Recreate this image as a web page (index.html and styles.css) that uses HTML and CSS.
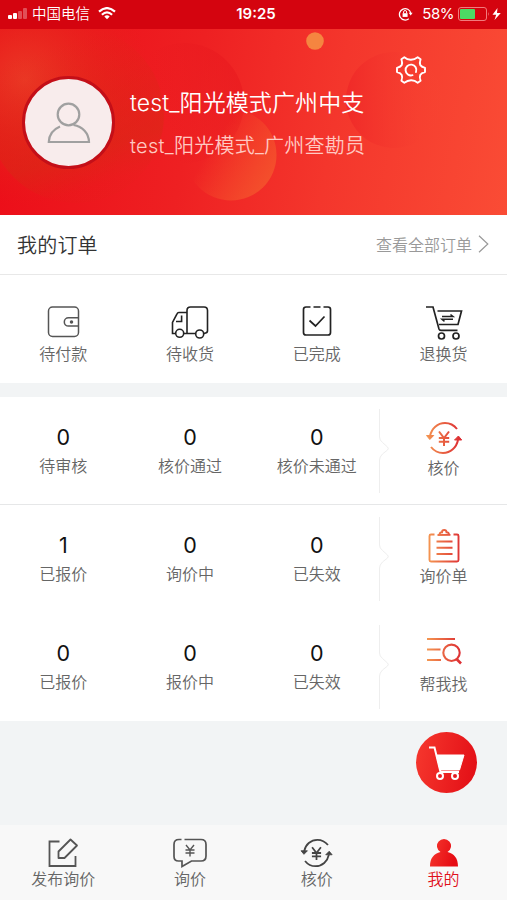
FILE: index.html
```
<!DOCTYPE html>
<html lang="zh-CN">
<head>
  <meta charset="UTF-8">
  <title>我的</title>
  <link rel="stylesheet" href="styles.css">
</head>
<body>
  <!-- shared gradients and symbols -->
  <svg class="defs" width="0" height="0">
    <defs>
      <linearGradient id="warm" gradientUnits="userSpaceOnUse" x1="0" y1="0" x2="36" y2="0">
        <stop offset="0" stop-color="#f59a52"/>
        <stop offset="1" stop-color="#dc2a32"/>
      </linearGradient>
      <linearGradient id="red" x1="0" y1="0" x2="1" y2="0.3">
        <stop offset="0" stop-color="#f6392f"/>
        <stop offset="1" stop-color="#e60c14"/>
      </linearGradient>
      <symbol id="price" viewBox="0 0 38 34">
        <path d="M5 15C6.500 7.500 12.500 2 20 2c5 0 9 2.200 12 6M33 19C31.500 26.500 25.500 32 18 32c-5 0-9-2.200-12-6" fill="none" stroke-width="2"/>
        <path d="M1.500 14.500h7.200L4.800 18.500zM29.500 19h7.200L33.400 15z" stroke-width="1"/>
        <path d="M14 10.500l5 6.500 5-6.500M19 17v8M13.800 17h10.400M13.800 20.800h10.400" fill="none" stroke-width="2"/>
      </symbol>
    </defs>
  </svg>

  <div class="status">
    <div class="carrier">
      <svg width="20" height="12" viewBox="0 0 20 12" fill="#fff">
        <rect x="0" y="7" width="4" height="4" rx="1"/>
        <rect x="5" y="5" width="4" height="6" rx="1"/>
        <rect x="10" y="3" width="4" height="8" rx="1" opacity="0.3"/>
        <rect x="15" y="0" width="4" height="11" rx="1" opacity="0.3"/>
      </svg>
      <span>中国电信</span>
      <svg class="wifi" width="18" height="13" viewBox="0 0 18 13" fill="none" stroke="#fff" stroke-width="2.200">
        <path d="M1 4.600Q9-2.400 17 4.600M3.900 7.700Q9 3 14.100 7.700"/>
        <path d="M6.300 9.400Q9 7 11.700 9.400L9 12.300z" fill="#fff" stroke="none"/>
      </svg>
    </div>
    <div class="time">19:25</div>
    <div class="power">
      <svg width="15" height="14" viewBox="0 0 15 14" fill="none" stroke="#fff" stroke-width="1.300">
        <path d="M10.800 11.700A5.700 5.700 0 1 1 12.700 6"/>
        <path d="M10.800 5.800h3.800l-1.900 2.800z" fill="#fff" stroke="none"/>
        <rect x="4.600" y="6.200" width="5" height="3.700" fill="#fff" stroke="none"/>
        <path d="M5.600 6.300V5a1.500 1.500 0 0 1 3 0v1.300" stroke-width="1"/>
      </svg>
      <span>58%</span>
      <svg width="44" height="14" viewBox="0 0 44 14">
        <rect x="0.500" y="0.500" width="28" height="13" rx="2.500" fill="none" stroke="#f27b7d"/>
        <rect x="2" y="2" width="15" height="10" rx="1" fill="#4cd964"/>
        <path d="M30 5q1.500 2 0 4z" fill="#f27b7d"/>
        <path d="M39.500 1L34.500 7.700h3.700L36.500 13 42.800 6H39z" fill="#fff"/>
      </svg>
    </div>
  </div>

  <div class="profile">
    <svg class="bubbles" width="507" height="186" viewBox="0 29 507 186">
      <defs>
        <radialGradient id="glow" gradientUnits="userSpaceOnUse" cx="25" cy="80" r="125">
          <stop offset="0" stop-color="#ec4028" stop-opacity="0.850"/>
          <stop offset="1" stop-color="#e02818" stop-opacity="0"/>
        </radialGradient>
        <linearGradient id="shade" x1="0" y1="0" x2="0.300" y2="1">
          <stop offset="0.200" stop-color="#d62a14" stop-opacity="0"/>
          <stop offset="0.800" stop-color="#d62a14" stop-opacity="0.700"/>
          <stop offset="1" stop-color="#d62a14" stop-opacity="0.100"/>
        </linearGradient>
        <linearGradient id="disc" x1="0" y1="0.600" x2="1" y2="0.300">
          <stop offset="0.300" stop-color="#e8181e" stop-opacity="0"/>
          <stop offset="1" stop-color="#e8181e" stop-opacity="0.600"/>
        </linearGradient>
        <linearGradient id="orange" x1="0.200" y1="0.200" x2="1" y2="0.700">
          <stop offset="0.200" stop-color="#f4502a" stop-opacity="0"/>
          <stop offset="1" stop-color="#f4502c"/>
        </linearGradient>
        <linearGradient id="fade" x1="0" y1="0" x2="1" y2="0">
          <stop offset="0" stop-color="#f02a28"/>
          <stop offset="1" stop-color="#f84633" stop-opacity="0.100"/>
        </linearGradient>
      </defs>
      <rect x="0" y="29" width="160" height="186" fill="url(#glow)"/>
      <circle cx="76" cy="115" r="88" fill="url(#shade)" opacity="0.700"/>
      <circle cx="184" cy="103" r="60" fill="url(#disc)"/>
      <circle cx="231" cy="155" r="45.500" fill="url(#orange)"/>
      <circle cx="394" cy="100" r="48" fill="url(#fade)"/>
      <circle cx="315" cy="41" r="8.800" fill="#f58540"/>
    </svg>
    <div class="avatar">
      <svg width="44" height="42" viewBox="0 0 44 42" fill="none" stroke="#a0a0a0" stroke-width="2.200">
        <circle cx="21.500" cy="12.500" r="10.800"/>
        <path d="M13 24.500C6 27.500 2 33 1.800 40H42c-.2-9-6.500-15.500-15.500-17"/>
      </svg>
    </div>
    <div class="who">
      <div class="name">test_阳光模式广州中支</div>
      <div class="role">test_阳光模式_广州查勘员</div>
    </div>
    <svg class="gear" width="30" height="28" viewBox="0 0 30 28" fill="none" stroke="#fff" stroke-width="1.900" stroke-linejoin="round" stroke-linecap="round">
      <path d="M8.300 1.300Q11.500 4 15 3.800T21.700 1.300L24.600 3.300C22.800 8.500 24 10.600 29 11.900V16.100C24 17.400 22.800 19.500 24.600 24.700L21.700 26.700Q18.500 24 15 24.200T8.300 26.700L5.400 24.700C7.200 19.500 6 17.400 1 16.100V11.900C6 10.600 7.200 8.500 5.400 3.300z"/>
      <path d="M16.500 19.200A5.400 5.400 0 1 1 20 16"/>
    </svg>
  </div>

  <div class="orders-head">
    <h2>我的订单</h2>
    <a class="more">查看全部订单
      <svg width="11" height="18" viewBox="0 0 11 18" fill="none" stroke="#999" stroke-width="1.200"><path d="M1 .8L9.800 9 1 17.200"/></svg>
    </a>
  </div>

  <div class="orders">
    <div class="item">
      <svg width="34" height="34" viewBox="0 0 34 34" fill="none" stroke="#555" stroke-width="1.500">
        <rect x="2.500" y="2" width="30" height="29.500" rx="4"/>
        <path d="M32.500 12.700H22.500a4.200 4.200 0 0 0 0 8.400h10"/>
        <circle cx="25.500" cy="17" r="1" fill="#333"/>
      </svg>
      <span>待付款</span>
    </div>
    <div class="item">
      <svg width="38" height="34" viewBox="0 0 38 34" fill="none" stroke="#222" stroke-width="1.600">
        <path d="M5 28.500H1.500V17.500L6 8.800q.6-1.300 1.800-1.300H16M16 28.500V5.500Q16 2 19.500 2H33q3.500 0 3.500 3.500V26q0 2-3.500 2.500M12.500 28.500h12"/>
        <path d="M10.600 10.500V16.500H5"/>
        <circle cx="8.700" cy="28.300" r="4"/>
        <circle cx="28.700" cy="29" r="4"/>
      </svg>
      <span>待收货</span>
    </div>
    <div class="item">
      <svg width="30" height="34" viewBox="0 0 30 34" fill="none" stroke="#222" stroke-width="1.700">
        <path d="M8.500 2H4Q1.500 2 1.500 4.500v23Q1.500 30 4 30h22q2.500 0 2.500-2.500v-23Q28.500 2 26 2h-4.500M11.500 2h7"/>
        <path d="M7.500 15.500l6 5.500 9-9.500"/>
      </svg>
      <span>已完成</span>
    </div>
    <div class="item">
      <svg width="38" height="35" viewBox="0 0 38 35" fill="none" stroke="#222" stroke-width="1.700">
        <path d="M1 2h7L14 24q.4 1.300 2 1.300h16.500M12.500 6H36.500L33 19.500H14"/>
        <path d="M17 11.500h11l-2.500-2M28 14.300H17l2.500 2" stroke-width="1.500"/>
        <circle cx="16.500" cy="31" r="3"/>
        <circle cx="31" cy="31" r="3"/>
      </svg>
      <span class="tight">退换货</span>
    </div>
  </div>

  <div class="stats">
    <div class="row line">
      <div class="stat"><b>0</b><span>待审核</span></div>
      <div class="stat"><b>0</b><span>核价通过</span></div>
      <div class="stat"><b>0</b><span>核价未通过</span></div>
      <div class="entry">
        <svg class="notch" width="12" height="84" viewBox="0 0 12 84"><path d="M1.500 0V28q0 3 3 5.500L9.500 38q1.500 1.500 0 3L4.500 45q-3 3-3 6V84"/></svg>
        <svg width="38" height="34" fill="url(#warm)" stroke="url(#warm)"><use href="#price"/></svg>
        <span>核价</span>
      </div>
    </div>
    <div class="row">
      <div class="stat"><b>1</b><span>已报价</span></div>
      <div class="stat"><b>0</b><span>询价中</span></div>
      <div class="stat"><b>0</b><span>已失效</span></div>
      <div class="entry">
        <svg class="notch" width="12" height="84" viewBox="0 0 12 84"><path d="M1.500 0V28q0 3 3 5.500L9.500 38q1.500 1.500 0 3L4.500 45q-3 3-3 6V84"/></svg>
        <svg width="34" height="34" viewBox="0 0 34 34" fill="none" stroke="url(#warm)" stroke-width="1.900">
          <path d="M7.500 5.500H4Q2.500 5.500 2.500 7V31q0 1.500 1.500 1.500h26q1.500 0 1.500-1.500V7q0-1.500-1.500-1.500h-3.500"/>
          <path d="M10.500 6L23.500 5.900M12.500 5.500q.3-2.200 2.500-2.200 0-2.300 2.200-2.300T19.500 3.300q2.200 0 2.500 2.200"/>
          <path d="M9.500 12.500h16M9.500 18.800h16.010M9.500 25h16.020"/>
        </svg>
        <span>询价单</span>
      </div>
    </div>
    <div class="row">
      <div class="stat"><b>0</b><span>已报价</span></div>
      <div class="stat"><b>0</b><span>报价中</span></div>
      <div class="stat"><b>0</b><span>已失效</span></div>
      <div class="entry">
        <svg class="notch" width="12" height="84" viewBox="0 0 12 84"><path d="M1.500 0V28q0 3 3 5.500L9.500 38q1.500 1.500 0 3L4.500 45q-3 3-3 6V84"/></svg>
        <svg width="36" height="34" viewBox="0 0 36 34" fill="none" stroke="url(#warm)" stroke-width="2.100">
          <path d="M1 2h28M1 12.500h13.500M1 23h14"/>
          <circle cx="25.500" cy="15.800" r="8.200"/>
          <path d="M30.500 22l4.500 4.500" stroke-width="2.600"/>
        </svg>
        <span>帮我找</span>
      </div>
    </div>
  </div>

  <div class="blank">
    <div class="fab">
      <svg width="38" height="34" viewBox="0 0 38 34" fill="none" stroke="#fff" stroke-width="2">
        <path d="M1 1.500h5.500L12.500 26h18.500"/>
        <path d="M8.500 9H36L31.500 24H12z" fill="#fff" stroke-width="1"/>
        <circle cx="12" cy="30" r="3" fill="#ec2024"/>
        <circle cx="27" cy="30" r="3" fill="#e61a1e"/>
      </svg>
    </div>
  </div>

  <div class="tabs">
    <div class="tab">
      <svg width="32" height="30" viewBox="0 0 32 30" fill="none" stroke="#555" stroke-width="1.800">
        <path d="M12.500 3.500H2.500V28H28.500V18"/>
        <path d="M23.500 1.500L30 7.500 17.500 20H11.500V13.500z" stroke-linejoin="round"/>
      </svg>
      <span>发布询价</span>
    </div>
    <div class="tab">
      <svg width="34" height="30" viewBox="0 0 34 30" fill="none" stroke="#555" stroke-width="1.700">
        <path d="M8.500 1.500H6Q1 1.500 1 6.500V18.500Q1 23 5.500 23H9v5.500L18.500 23H28q5 0 5-5V6.500Q33 1.500 28 1.500H11.500"/>
        <path d="M13 7l4 5 4-5M17 12v6.500M12.500 12h9M12.500 15h9" stroke-width="1.400"/>
      </svg>
      <span>询价</span>
    </div>
    <div class="tab">
      <svg width="35" height="30" fill="#444" stroke="#444"><use href="#price"/></svg>
      <span>核价</span>
    </div>
    <div class="tab active">
      <svg width="30" height="30" viewBox="0 0 30 30" fill="url(#red)">
        <path d="M1 28.500C1 20 5 15.500 11.500 14a7 7 0 1 1 7 0C25 15.500 29 20 29 28.500z"/>
      </svg>
      <span>我的</span>
    </div>
  </div>
</body>
</html>
```

FILE: styles.css
```
* {
  box-sizing: border-box;
}
body {
  margin: 0;
  width: 507px;
  height: 900px;
  display: flex;
  flex-direction: column;
  overflow: hidden;
  background: #f2f4f5;
  font-family: Inter, "Noto Sans CJK SC", sans-serif;
  font-weight: 350;
  color: #666;
}
svg {
  display: block;
  flex-shrink: 0;
}
.defs {
  position: absolute;
}

/* status bar */
.status {
  height: 29px;
  display: grid;
  grid-template-columns: 1fr auto 1fr;
  align-items: center;
  padding: 0 5px 2px 8px;
  background: #d4040f;
  color: #fff;
  font-size: 15px;
  line-height: 20px;
}
.carrier,
.power {
  display: flex;
  align-items: center;
}
.carrier {
  gap: 4px;
  font-size: 14.500px;
}
.wifi {
  margin-left: 4px;
}
.time {
  padding-left: 2px;
  font-weight: 600;
}
.power {
  justify-content: flex-end;
  font-weight: 400;
}
.power span {
  margin: 0 4px 0 9px;
  letter-spacing: -0.500px;
}

/* profile */
.profile {
  position: relative;
  height: 186px;
  display: flex;
  padding: 0 81px 0 22px;
  background: linear-gradient(100deg, #ec0c18 0%, #ee2022 38%, #f4362c 65%, #fa4c35 100%);
  color: #fff;
}
.bubbles {
  position: absolute;
  left: 0;
  top: 0;
}
.avatar {
  position: relative;
  width: 93px;
  height: 93px;
  margin-top: 47px;
  border: 3px solid #c40f18;
  border-radius: 50%;
  background: #f8ecec;
  display: flex;
  align-items: center;
  justify-content: center;
}
.who {
  position: relative;
  flex: 1;
  margin: 57px 0 0 15px;
  white-space: nowrap;
}
.name {
  font-size: 23px;
  line-height: 34px;
  letter-spacing: 0.100px;
}
.role {
  margin-top: 11px;
  font-size: 20px;
  line-height: 30px;
  letter-spacing: 0.250px;
  color: #ffc9c2;
}
.gear {
  position: relative;
  margin-top: 27px;
}

/* orders */
.orders-head {
  height: 60px;
  display: flex;
  align-items: center;
  justify-content: space-between;
  padding: 0 18px 0 17px;
  background: #fff;
  border-bottom: 1px solid #e8e8e8;
}
.orders-head h2 {
  margin: 0;
  font-size: 20px;
  font-weight: 350;
  letter-spacing: 0.200px;
  color: #333;
}
.more {
  display: flex;
  align-items: center;
  gap: 6px;
  margin-top: -2px;
  font-size: 16px;
  color: #999;
}
.orders {
  height: 108px;
  display: grid;
  grid-template-columns: repeat(4, 1fr);
  padding-top: 30px;
  background: #fff;
}
.item,
.stat,
.entry,
.tab {
  display: flex;
  flex-direction: column;
  align-items: center;
  font-size: 16px;
  line-height: 24px;
}
.item span {
  margin-top: 3px;
}
.item .tight {
  margin-top: 2px;
}

/* stats */
.stats {
  margin-top: 14px;
  background: #fff;
}
.row {
  height: 108px;
  display: grid;
  grid-template-columns: repeat(4, 1fr);
}
.line {
  border-bottom: 1px solid #e6e7e8;
}
.stat {
  padding-top: 26px;
}
.stat b {
  font-size: 21.500px;
  font-weight: 400;
  line-height: 28px;
  color: #111;
}
.stat span {
  margin-top: 3px;
}
.entry {
  position: relative;
  padding-top: 24px;
}
.notch {
  position: absolute;
  left: -2px;
  top: 12px;
  fill: none;
  stroke: #eee;
}
.entry span {
  margin-top: 1px;
}

/* floating cart */
.blank {
  flex: 1;
  display: flex;
  justify-content: flex-end;
  padding: 11px 30px 0 0;
}
.fab {
  width: 61px;
  height: 61px;
  border-radius: 50%;
  background: linear-gradient(100deg, #f6382e, #e20d15);
  display: flex;
  align-items: center;
  justify-content: center;
}

/* tab bar */
.tabs {
  height: 75px;
  display: grid;
  grid-template-columns: repeat(4, 1fr);
  padding-top: 13px;
  background: #f8f8f8;
}
.tab span {
  margin-top: -1px;
}
.active {
  color: #e0101c;
}
```
